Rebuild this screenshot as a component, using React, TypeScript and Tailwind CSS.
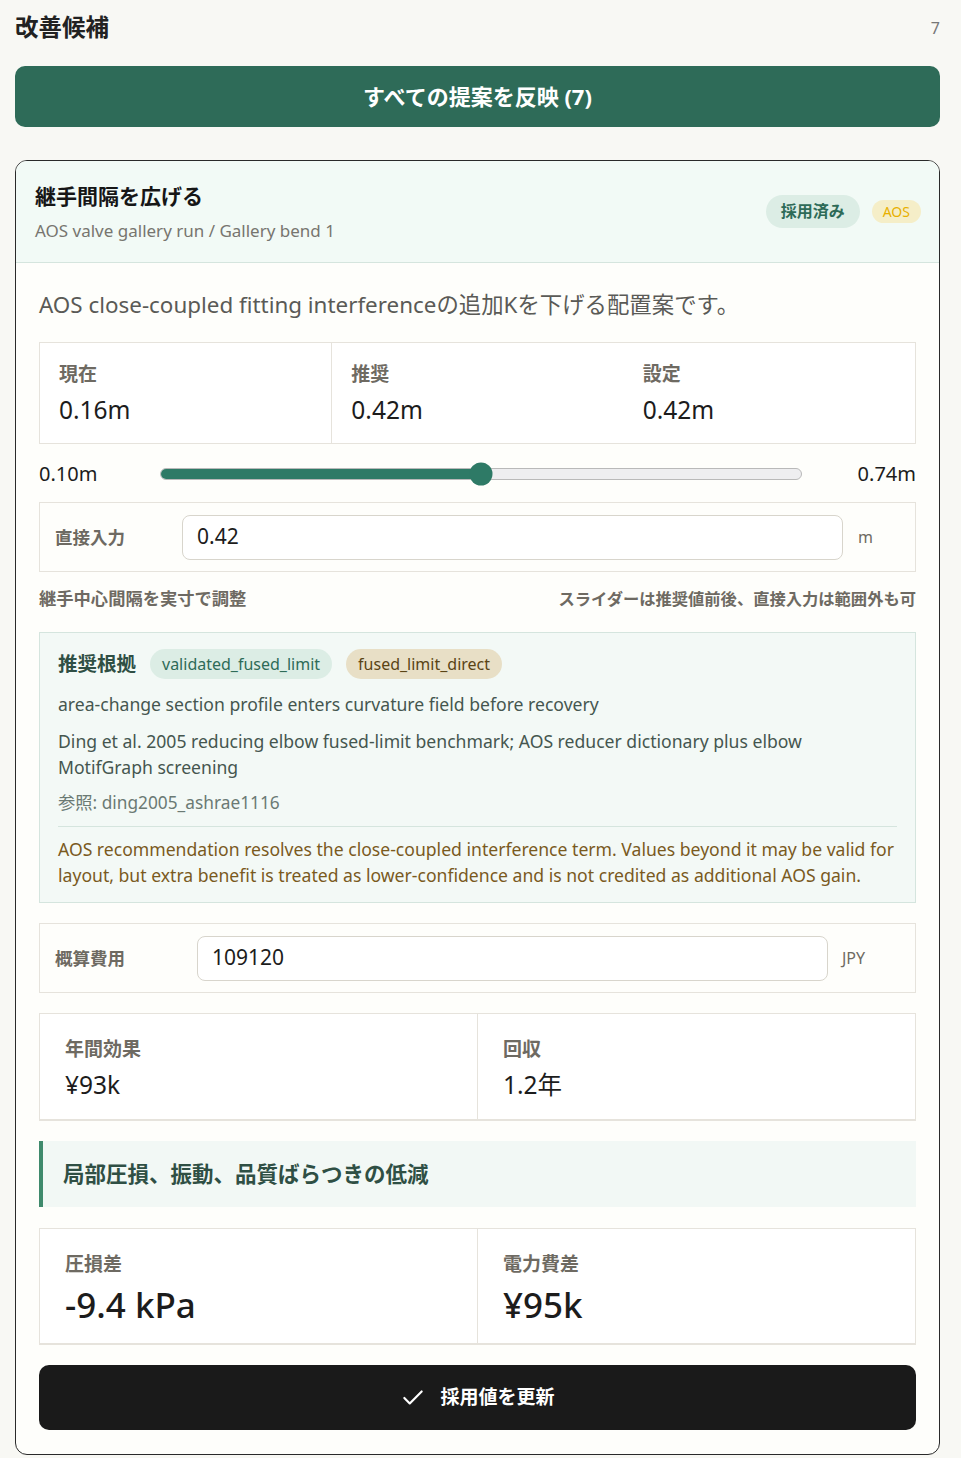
import { Check } from "lucide-react"

const font = { fontFamily: '"Noto Sans", "Noto Sans CJK JP", sans-serif' }

function Metric({ label, value, big, border, wide }: { label: string; value: string; big?: boolean; border?: boolean; wide?: boolean }) {
  return (
    <div className={`flex-1 ${wide ? "pl-[25px] pt-[22px]" : "pl-[19px] pt-[18px]"} ${border ? "border-r border-[#e6e3dc]" : ""}`}>
      <div className="text-[19px] leading-[26px] font-semibold text-[#6e6a62]">{label}</div>
      <div className={`mt-[6px] text-[#1c1c1c] ${big ? "text-[35px] leading-[44px] font-medium" : "text-[24.5px] leading-[34px]"}`}>{value}</div>
    </div>
  )
}

export default function App() {
  const min = 0.1
  const max = 0.74
  const val = 0.42
  const pct = ((val - min) / (max - min)) * 100

  return (
    <div style={font} className="min-h-screen bg-[#f8f8f4] pl-[15px] pr-[21px] pt-[12px] pb-[3px]">
      <div className="flex items-center justify-between h-[32px]">
        <h1 className="text-[23.5px] font-bold text-[#222]">改善候補</h1>
        <span className="text-[16px] text-[#777]">7</span>
      </div>

      <button className="mt-[22px] w-full h-[61px] rounded-[10px] bg-[#2e6b58] text-white text-[22px] font-bold">
        すべての提案を反映 (7)
      </button>

      <div className="mt-[33px] rounded-[12px] border border-[#2a2a2a] bg-[#fefefb] overflow-hidden">
        <div className="flex items-center justify-between bg-[#f2faf6] border-b border-[#d5e5de] pl-[19px] pr-[18px] pt-[20px] pb-[18px]">
          <div>
            <div className="text-[21px] leading-[30px] font-bold text-[#161616]">継手間隔を広げる</div>
            <div className="mt-[7px] text-[17px] leading-[26px] text-[#77756f]">AOS valve gallery run / Gallery bend 1</div>
          </div>
          <div className="flex items-center gap-[12px] -mt-[3px]">
            <span className="rounded-full bg-[#dcede5] px-[15px] h-[33px] flex items-center text-[16px] font-semibold text-[#2e6b58]">採用済み</span>
            <span className="rounded-full bg-[#f5eec8] px-[11px] h-[23px] flex items-center text-[14px] text-[#e8b000]">AOS</span>
          </div>
        </div>

        <div className="px-[23px] pt-[26px] pb-[24px] flex flex-col">
          <p className="text-[22.4px] leading-[32px] text-[#5a5a56]">AOS close-coupled fitting interferenceの追加Kを下げる配置案です。</p>

          <div className="mt-[21px] flex h-[102px] border border-[#e6e3dc] bg-white">
            <Metric label="現在" value="0.16m" border />
            <Metric label="推奨" value="0.42m" />
            <Metric label="設定" value="0.42m" />
          </div>

          <div className="mt-[18px] flex items-center h-[24px]">
            <span className="w-[121px] text-[20px] text-[#1c1c1c]">0.10m</span>
            <div className="relative flex-1 h-[12px] rounded-full bg-[#eeeef0] border border-[#b9b9b9]">
              <div className="h-full rounded-full bg-[#2e7a66]" style={{ width: `${pct}%` }} />
              <div className="absolute top-1/2 w-[23px] h-[23px] -translate-x-1/2 -translate-y-1/2 rounded-full bg-[#2e7a66]" style={{ left: `${pct}%` }} />
            </div>
            <span className="w-[114px] text-right text-[20px] text-[#1c1c1c]">0.74m</span>
          </div>

          <div className="mt-[16px] flex items-center h-[70px] border border-[#e6e3dc] pl-[15px]">
            <span className="w-[127px] text-[17.5px] font-semibold text-[#6e6a62]">直接入力</span>
            <div className="flex-1 h-[45px] rounded-[8px] border border-[#d8d5cc] bg-white flex items-center px-[14px] text-[21px] text-[#1c1c1c]">0.42</div>
            <span className="w-[72px] pl-[15px] text-[16px] text-[#6e6a62]">m</span>
          </div>

          <div className="mt-[16px] flex justify-between items-center h-[22px] font-semibold text-[#6e6a62]">
            <span className="text-[17.3px]">継手中心間隔を実寸で調整</span>
            <span className="text-[16.3px]">スライダーは推奨値前後、直接入力は範囲外も可</span>
          </div>

          <div className="mt-[22px] border border-[#d5e5de] bg-[#f3f9f6] px-[18px] pt-[16px] pb-[14px]">
            <div className="flex items-center gap-[14px] h-[30px]">
              <span className="text-[19.5px] font-bold text-[#2f4f44]">推奨根拠</span>
              <span className="rounded-full bg-[#dcede5] px-[12px] h-[30px] flex items-center text-[16px] text-[#2e6b58]">validated_fused_limit</span>
              <span className="rounded-full bg-[#e8dfc6] px-[12px] h-[30px] flex items-center text-[16px] text-[#5a4415]">fused_limit_direct</span>
            </div>
            <p className="mt-[12px] text-[17.6px] leading-[26px] text-[#45564f]">area-change section profile enters curvature field before recovery</p>
            <p className="mt-[11px] text-[17.6px] leading-[26px] text-[#45564f]">Ding et al. 2005 reducing elbow fused-limit benchmark; AOS reducer dictionary plus elbow MotifGraph screening</p>
            <p className="mt-[10px] text-[17.3px] leading-[26px] text-[#6b7a74]">参照: ding2005_ashrae1116</p>
            <div className="mt-[10px] border-t border-[#d5e5de]" />
            <p className="mt-[9px] text-[17.6px] leading-[26px] text-[#7a5a1e]">AOS recommendation resolves the close-coupled interference term. Values beyond it may be valid for layout, but extra benefit is treated as lower-confidence and is not credited as additional AOS gain.</p>
          </div>

          <div className="mt-[20px] flex items-center h-[70px] border border-[#e6e3dc] pl-[15px]">
            <span className="w-[142px] text-[17.5px] font-semibold text-[#6e6a62]">概算費用</span>
            <div className="flex-1 h-[45px] rounded-[8px] border border-[#d8d5cc] bg-white flex items-center px-[14px] text-[21px] text-[#1c1c1c]">109120</div>
            <span className="w-[87px] pl-[14px] text-[16px] text-[#6e6a62]">JPY</span>
          </div>

          <div className="mt-[20px] flex h-[108px] border border-[#e6e3dc] border-b-2 bg-white">
            <Metric label="年間効果" value="¥93k" border wide />
            <Metric label="回収" value="1.2年" wide />
          </div>

          <div className="mt-[20px] h-[66px] flex items-center border-l-4 border-[#3f8a6c] bg-[#f2f8f5] pl-[20px]">
            <span className="text-[21.5px] font-semibold text-[#2f4f44]">局部圧損、振動、品質ばらつきの低減</span>
          </div>

          <div className="mt-[21px] flex h-[117px] border border-[#e6e3dc] border-b-2 bg-white">
            <Metric label="圧損差" value="-9.4 kPa" border wide big />
            <Metric label="電力費差" value="¥95k" wide big />
          </div>

          <button className="mt-[20px] h-[65px] w-full rounded-[10px] bg-[#1a1a1a] text-white flex items-center justify-center gap-[14px]">
            <Check className="w-[26px] h-[26px]" strokeWidth={2} />
            <span className="text-[19px] font-bold">採用値を更新</span>
          </button>
        </div>
      </div>
    </div>
  )
}
